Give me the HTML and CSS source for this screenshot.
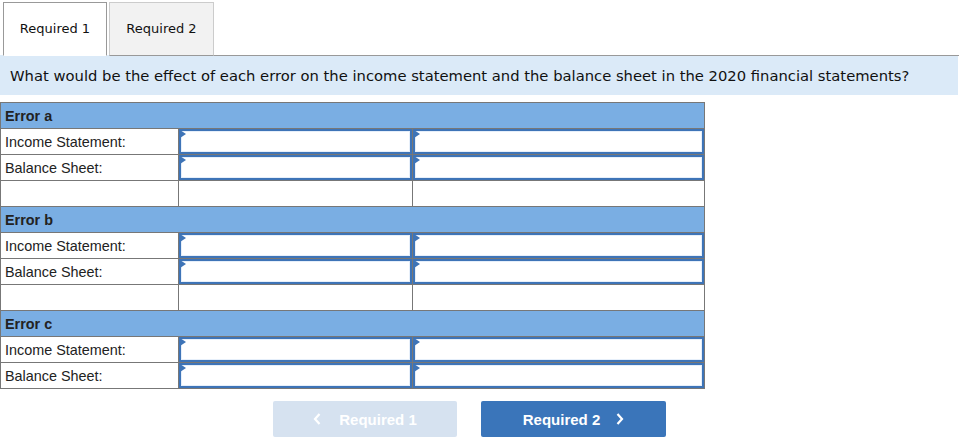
FILE: index.html
```html
<!DOCTYPE html>
<html>
<head>
<meta charset="utf-8">
<link rel="stylesheet" href="styles.css">
</head>
<body>
<div class="page">
  <div class="tabs">
    <div class="tab active">Required 1</div>
    <div class="tab">Required 2</div>
    <div class="tab-fill"></div>
  </div>
  <div class="question">What would be the effect of each error on the income statement and the balance sheet in the 2020 financial statements?</div>
  <table class="grid">
    <colgroup><col class="c1"><col class="c2"><col class="c3"></colgroup>
    <tr class="head"><td colspan="3">Error a</td></tr>
    <tr><td class="lbl">Income Statement:</td><td class="in"><div class="box"></div></td><td class="in"><div class="box"></div></td></tr>
    <tr><td class="lbl">Balance Sheet:</td><td class="in"><div class="box"></div></td><td class="in"><div class="box"></div></td></tr>
    <tr class="blank"><td></td><td></td><td></td></tr>
    <tr class="head"><td colspan="3">Error b</td></tr>
    <tr><td class="lbl">Income Statement:</td><td class="in"><div class="box"></div></td><td class="in"><div class="box"></div></td></tr>
    <tr><td class="lbl">Balance Sheet:</td><td class="in"><div class="box"></div></td><td class="in"><div class="box"></div></td></tr>
    <tr class="blank"><td></td><td></td><td></td></tr>
    <tr class="head"><td colspan="3">Error c</td></tr>
    <tr><td class="lbl">Income Statement:</td><td class="in"><div class="box"></div></td><td class="in"><div class="box"></div></td></tr>
    <tr><td class="lbl">Balance Sheet:</td><td class="in"><div class="box"></div></td><td class="in"><div class="box"></div></td></tr>
  </table>
  <div class="nav">
    <div class="btn prev"><svg class="chev" width="8" height="12" viewBox="0 0 8 12"><path d="M6.5 1 L2 6 L6.5 11" fill="none" stroke="#fff" stroke-width="2.2"/></svg>Required 1</div>
    <div class="btn next">Required 2<svg class="chev" width="8" height="12" viewBox="0 0 8 12"><path d="M1.5 1 L6 6 L1.5 11" fill="none" stroke="#fff" stroke-width="2.2"/></svg></div>
  </div>
</div>
</body>
</html>
```
FILE: styles.css
```css
* { box-sizing: border-box; }
body { margin: 0; background: #fff; }
.page { width: 978px; }
.tabs { display: flex; align-items: flex-end; height: 56px; padding-top: 2px; padding-left: 3px; }
.tab {
  height: 54px; display: flex; align-items: center; justify-content: center;
  font-family: "DejaVu Sans", Verdana, sans-serif; font-size: 13px; color: #111;
  border: 1px solid #ccc; border-bottom: 1px solid #999; background: #f2f2f2;
  margin-right: 2px; width: 105px; padding-bottom: 1px;
}
.tab.active { background: #fff; border-color: #999; border-bottom-color: #fff; width: 104px; }
.tab-fill { flex: 0 0 745px; border-bottom: 1px solid #999; height: 1px; margin-left: -2px; }
.question {
  width: 958px; height: 40px; background: #dbeaf8; margin-top: -1px;
  font-family: "DejaVu Sans", Verdana, sans-serif; font-size: 14.75px; color: #111;
  padding: 12px 0 0 10px; white-space: nowrap;
}
.grid { border-collapse: collapse; margin-top: 7px; width: 704px; table-layout: fixed; font-family: "Liberation Sans", Arial, sans-serif; font-size: 14.4px; color: #222; }
.c1 { width: 178px; } .c2 { width: 234px; } .c3 { width: 292px; }
.grid td { border: 1px solid #777; height: 26px; padding: 0 4px; }
.head td { background: #7aaee3; font-weight: bold; color: #222; }
.grid td.in { padding: 0; }
.box { height: 25px; border: 2px solid #3e74b7; background: #fff; position: relative; box-shadow: inset 0 0 0 1px #e6effa; }
.box::before { content: ""; position: absolute; left: -1px; top: -1px; border-left: 6px solid #3e74b7; border-top: 4px solid transparent; border-bottom: 4px solid transparent; }
.nav { display: flex; gap: 24px; margin: 12px 0 0 273px; }
.btn {
  width: 185px; height: 36px; border-radius: 2px; display: flex; align-items: center; justify-content: center;
  font-family: "Liberation Sans", Arial, sans-serif; font-size: 15px; font-weight: bold; color: #fff;
}
.prev { background: #d6e2f0; width: 184px; }
.next { background: #3a75ba; }
.prev .chev { margin-right: 18px; }
.next .chev { margin-left: 16px; }
```
